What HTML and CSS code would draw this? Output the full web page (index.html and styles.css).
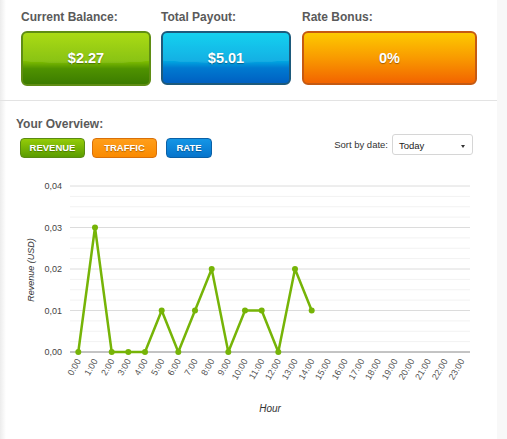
FILE: index.html
```html
<!DOCTYPE html>
<html lang="en">
<head>
    <meta charset="UTF-8">
    <title>Dashboard</title>
    <link rel="stylesheet" href="styles.css">
</head>
<body>
<div class="page">
    <div class="stats">
        <div class="stat">
            <div class="stat-label">Current Balance:</div>
            <div class="stat-box green">$2.27</div>
        </div>
        <div class="stat">
            <div class="stat-label">Total Payout:</div>
            <div class="stat-box blue">$5.01</div>
        </div>
        <div class="stat wide">
            <div class="stat-label">Rate Bonus:</div>
            <div class="stat-box orange">0%</div>
        </div>
    </div>

    <div class="overview">
        <div class="title">Your Overview:</div>
        <div class="toolbar">
            <div class="tabs">
                <div class="tab tab-green">REVENUE</div>
                <div class="tab tab-orange">TRAFFIC</div>
                <div class="tab tab-blue">RATE</div>
            </div>
            <div class="sort">
                <span class="sort-label">Sort by date:</span>
                <div class="select">Today<span class="arrow"></span></div>
            </div>
        </div>
    </div>

    <div class="chart">
        <svg width="497" height="269" viewBox="0 0 497 269">
            <g class="grid-minor">
                <line x1="70" x2="470" y1="26.4" y2="26.4"/>
                <line x1="70" x2="470" y1="36.75" y2="36.75"/>
                <line x1="70" x2="470" y1="47.1" y2="47.1"/>
                <line x1="70" x2="470" y1="67.9" y2="67.9"/>
                <line x1="70" x2="470" y1="78.25" y2="78.25"/>
                <line x1="70" x2="470" y1="88.6" y2="88.6"/>
                <line x1="70" x2="470" y1="109.4" y2="109.4"/>
                <line x1="70" x2="470" y1="119.75" y2="119.75"/>
                <line x1="70" x2="470" y1="130.1" y2="130.1"/>
                <line x1="70" x2="470" y1="150.9" y2="150.9"/>
                <line x1="70" x2="470" y1="161.25" y2="161.25"/>
                <line x1="70" x2="470" y1="171.6" y2="171.6"/>
            </g>
            <g class="grid-major">
                <line x1="70" x2="470" y1="16" y2="16"/>
                <line x1="70" x2="470" y1="57.5" y2="57.5"/>
                <line x1="70" x2="470" y1="99" y2="99"/>
                <line x1="70" x2="470" y1="140.5" y2="140.5"/>
            </g>
            <line class="axis" x1="70" x2="470" y1="182" y2="182"/>

            <g class="y-labels">
                <text x="62" y="19">0,04</text>
                <text x="62" y="60.5">0,03</text>
                <text x="62" y="102">0,02</text>
                <text x="62" y="143.5">0,01</text>
                <text x="62" y="185">0,00</text>
            </g>
            <text class="axis-title" transform="translate(34,100) rotate(-90)">Revenue (USD)</text>

            <g class="x-labels">
                <text transform="translate(81.3,191) rotate(-60)">0:00</text>
                <text transform="translate(98,191) rotate(-60)">1:00</text>
                <text transform="translate(114.7,191) rotate(-60)">2:00</text>
                <text transform="translate(131.3,191) rotate(-60)">3:00</text>
                <text transform="translate(148,191) rotate(-60)">4:00</text>
                <text transform="translate(164.7,191) rotate(-60)">5:00</text>
                <text transform="translate(181.3,191) rotate(-60)">6:00</text>
                <text transform="translate(198,191) rotate(-60)">7:00</text>
                <text transform="translate(214.7,191) rotate(-60)">8:00</text>
                <text transform="translate(231.3,191) rotate(-60)">9:00</text>
                <text transform="translate(248,191) rotate(-60)">10:00</text>
                <text transform="translate(264.7,191) rotate(-60)">11:00</text>
                <text transform="translate(281.3,191) rotate(-60)">12:00</text>
                <text transform="translate(298,191) rotate(-60)">13:00</text>
                <text transform="translate(314.7,191) rotate(-60)">14:00</text>
                <text transform="translate(331.3,191) rotate(-60)">15:00</text>
                <text transform="translate(348,191) rotate(-60)">16:00</text>
                <text transform="translate(364.7,191) rotate(-60)">17:00</text>
                <text transform="translate(381.3,191) rotate(-60)">18:00</text>
                <text transform="translate(398,191) rotate(-60)">19:00</text>
                <text transform="translate(414.7,191) rotate(-60)">20:00</text>
                <text transform="translate(431.3,191) rotate(-60)">21:00</text>
                <text transform="translate(448,191) rotate(-60)">22:00</text>
                <text transform="translate(464.7,191) rotate(-60)">23:00</text>
            </g>
            <text class="axis-title hour" x="270" y="242">Hour</text>

            <polyline class="series" points="78.3,182 95,57.5 111.7,182 128.3,182 145,182 161.7,140.5 178.3,182 195,140.5 211.7,99 228.3,182 245,140.5 261.7,140.5 278.3,182 295,99 311.7,140.5"/>
            <g class="dots">
                <circle cx="78.3" cy="182" r="3"/>
                <circle cx="95" cy="57.5" r="3"/>
                <circle cx="111.7" cy="182" r="3"/>
                <circle cx="128.3" cy="182" r="3"/>
                <circle cx="145" cy="182" r="3"/>
                <circle cx="161.7" cy="140.5" r="3"/>
                <circle cx="178.3" cy="182" r="3"/>
                <circle cx="195" cy="140.5" r="3"/>
                <circle cx="211.7" cy="99" r="3"/>
                <circle cx="228.3" cy="182" r="3"/>
                <circle cx="245" cy="140.5" r="3"/>
                <circle cx="261.7" cy="140.5" r="3"/>
                <circle cx="278.3" cy="182" r="3"/>
                <circle cx="295" cy="99" r="3"/>
                <circle cx="311.7" cy="140.5" r="3"/>
            </g>
        </svg>
    </div>
</div>
</body>
</html>
```

FILE: styles.css
```css
* {
    box-sizing: border-box;
}

body {
    margin: 0;
    background: #f8f8f8;
    font-family: "Liberation Sans", Arial, sans-serif;
    color: #555;
}

.page {
    width: 497px;
    height: 439px;
    background: linear-gradient(to right, #ececec, #fff 6px);
}

/* top stats */

.stats {
    display: flex;
    height: 101px;
    padding: 10px 0 0 21px;
    border-bottom: 1px solid #e3e3e3;
}

.stat {
    width: 130px;
    margin-right: 10px;
}

.stat.wide {
    width: 175px;
    margin-left: 1px;
    margin-right: 0;
}

.stat-label {
    font-size: 12px;
    line-height: 14px;
    font-weight: bold;
    color: #5a5a5a;
    margin-bottom: 7px;
}

.stat-box {
    height: 55px;
    border: 2px solid;
    border-radius: 6px;
    color: #fff;
    font-size: 14.5px;
    font-weight: bold;
    text-align: center;
    line-height: 51px;
    text-shadow: 0 1px 1px rgba(0, 0, 0, .35);
}

.stat-box.green {
    border-color: #5f8d14;
    background: radial-gradient(ellipse 130% 60% at 50% 0%, rgba(255, 255, 255, .08) 99%, rgba(255, 255, 255, 0) 100%),
                linear-gradient(#a3d800, #80be00 55%, #4f9200 70%, #3c7c00);
}

.stat-box.blue {
    height: 54px;
    line-height: 50px;
    border-color: #1d5a7c;
    background: radial-gradient(ellipse 130% 60% at 50% 0%, rgba(255, 255, 255, .08) 99%, rgba(255, 255, 255, 0) 100%),
                linear-gradient(#00cdee, #00aae2 55%, #007ad0 70%, #0060c2);
}

.stat-box.orange {
    height: 54px;
    line-height: 50px;
    border-color: #c55a12;
    background: linear-gradient(#fdca00, #f99a00 50%, #f26400);
}

/* overview */

.overview {
    padding: 16px 24px 0 16px;
}

.title {
    font-size: 12px;
    line-height: 14px;
    font-weight: bold;
    color: #5a5a5a;
}

.toolbar {
    display: flex;
    justify-content: space-between;
    margin-top: 7px;
    height: 20px;
}

.tabs {
    display: flex;
    margin-left: 4px;
}

.tab {
    height: 20px;
    line-height: 18px;
    border: 1px solid;
    border-radius: 4px;
    color: #fff;
    font-size: 9.5px;
    font-weight: bold;
    text-align: center;
    text-shadow: 0 1px 1px rgba(0, 0, 0, .3);
}

.tab-green {
    width: 65px;
    border-color: #5a8a12;
    background: linear-gradient(#94cc08, #5a9c00);
}

.tab-orange {
    width: 65px;
    margin-left: 7px;
    border-color: #d8700a;
    background: linear-gradient(#ff9e1a, #fa8a00);
}

.tab-blue {
    width: 46px;
    margin-left: 9px;
    border-color: #0a60a6;
    background: linear-gradient(#1496e6, #0674cc);
}

.sort {
    display: flex;
    align-items: center;
    margin-top: -4px;
    height: 21px;
}

.sort-label {
    font-size: 9.5px;
    color: #333;
    margin-right: 4px;
}

.select {
    position: relative;
    width: 81px;
    height: 21px;
    padding: 0 6px;
    border: 1px solid #d6d6d6;
    border-radius: 3px;
    background: #fff;
    font-size: 9.5px;
    line-height: 22px;
    color: #222;
}

.select .arrow {
    position: absolute;
    right: 7px;
    top: 10px;
    border-left: 2px solid transparent;
    border-right: 2px solid transparent;
    border-top: 3px solid #333;
}

/* chart */

.chart {
    margin-top: 12px;
}

.chart svg {
    display: block;
}

.grid-minor line {
    stroke: #f2f2f2;
    stroke-width: 1;
}

.grid-major line {
    stroke: #dcdcdc;
    stroke-width: 1;
}

.axis {
    stroke: #888;
    stroke-width: 1;
}

.y-labels text {
    font-size: 9px;
    fill: #444;
    text-anchor: end;
}

.x-labels text {
    font-size: 9px;
    fill: #555;
    text-anchor: end;
}

.axis-title {
    font-size: 9px;
    font-style: italic;
    fill: #333;
    text-anchor: middle;
}

.axis-title.hour {
    font-size: 10px;
}

.series {
    fill: none;
    stroke: #76b407;
    stroke-width: 2.5;
    stroke-linejoin: round;
}

.dots circle {
    fill: #76b407;
}
```
